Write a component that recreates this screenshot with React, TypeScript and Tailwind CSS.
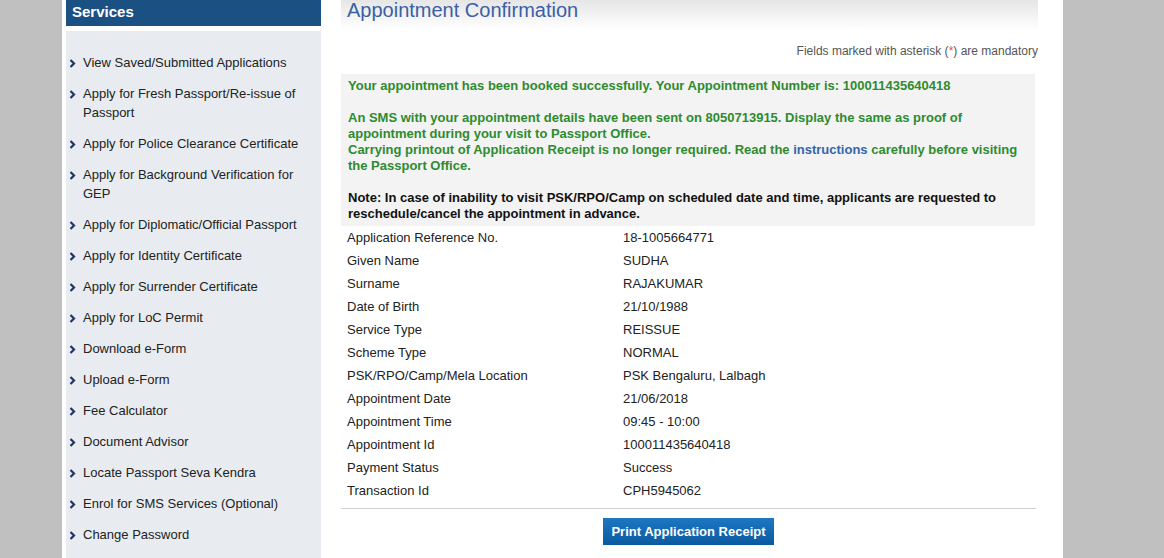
import React from 'react';

const services = [
  'View Saved/Submitted Applications',
  'Apply for Fresh Passport/Re-issue of Passport',
  'Apply for Police Clearance Certificate',
  'Apply for Background Verification for GEP',
  'Apply for Diplomatic/Official Passport',
  'Apply for Identity Certificate',
  'Apply for Surrender Certificate',
  'Apply for LoC Permit',
  'Download e-Form',
  'Upload e-Form',
  'Fee Calculator',
  'Document Advisor',
  'Locate Passport Seva Kendra',
  'Enrol for SMS Services (Optional)',
  'Change Password',
];

const details = [
  { label: 'Application Reference No.', value: '18-1005664771' },
  { label: 'Given Name', value: 'SUDHA' },
  { label: 'Surname', value: 'RAJAKUMAR' },
  { label: 'Date of Birth', value: '21/10/1988' },
  { label: 'Service Type', value: 'REISSUE' },
  { label: 'Scheme Type', value: 'NORMAL' },
  { label: 'PSK/RPO/Camp/Mela Location', value: 'PSK Bengaluru, Lalbagh' },
  { label: 'Appointment Date', value: '21/06/2018' },
  { label: 'Appointment Time', value: '09:45 - 10:00' },
  { label: 'Appointment Id', value: '100011435640418' },
  { label: 'Payment Status', value: 'Success' },
  { label: 'Transaction Id', value: 'CPH5945062' },
];

const Chevron = () => (
  <svg width="7" height="9" viewBox="0 0 7 9" className="shrink-0 mt-[6px]">
    <path d="M1.5 1 L5 4.5 L1.5 8" fill="none" stroke="#1f3566" strokeWidth="2.2" />
  </svg>
);

const App = () => {
  return (
    <div
      className="h-[558px] w-[1164px] overflow-hidden bg-[#c0c0c0] flex"
      style={{ fontFamily: '"Liberation Sans", Arial, sans-serif' }}
    >
      <div className="ml-[62px] w-[1001px] bg-white flex">
        {/* sidebar */}
        <aside className="ml-[4px] w-[255px] flex flex-col">
          <div className="h-[26px] bg-[#1b5083] text-white font-bold text-[15px] leading-[24px] pl-[6px]">
            Services
          </div>
          <div className="mt-[5px] flex-1 bg-[#e8ecf0] pt-[22px]">
            <ul className="flex flex-col gap-[12px]">
              {services.map((s, i) => (
                <li key={i} className="flex gap-[7px] pl-[3px] pr-[14px] text-[13px] leading-[19px] text-[#222]">
                  <Chevron />
                  <span>{s}</span>
                </li>
              ))}
            </ul>
          </div>
        </aside>

        {/* content */}
        <main className="ml-[20px] w-[697px] flex flex-col">
          <div className="h-[30px] bg-gradient-to-b from-[#e6e6e6] to-white pl-[6px]">
            <h1 className="text-[20px] leading-[20px] text-[#3a5fa5]">Appointment Confirmation</h1>
          </div>
          <p className="mt-[14px] text-right text-[12px] leading-[14px] text-[#555]">
            Fields marked with asterisk (<span className="text-[#d9534f]">*</span>) are mandatory
          </p>
          <div className="mt-[16px] w-[694px] bg-[#f3f3f3] pt-[4px] pb-[4px] pl-[7px] pr-[10px] text-[13px] leading-[16px] font-bold text-[#2e8b2e]">
            <p>Your appointment has been booked successfully. Your Appointment Number is: 100011435640418</p>
            <p className="mt-[16px]">
              An SMS with your appointment details have been sent on 8050713915. Display the same as proof of
              appointment during your visit to Passport Office.
            </p>
            <p>
              Carrying printout of Application Receipt is no longer required. Read the{' '}
              <span className="text-[#3366aa]">instructions</span> carefully before visiting the Passport Office.
            </p>
            <p className="mt-[16px] text-[#111]">
              Note: In case of inability to visit PSK/RPO/Camp on scheduled date and time, applicants are requested to
              reschedule/cancel the appointment in advance.
            </p>
          </div>
          <div className="flex flex-col">
            {details.map((d, i) => (
              <div key={i} className="flex h-[23px] items-center text-[13px] text-[#222]">
                <span className="w-[282px] pl-[6px]">{d.label}</span>
                <span>{d.value}</span>
              </div>
            ))}
          </div>
          <div className="mt-[6px] h-px w-[695px] bg-[#cfcfcf]" />
          <div className="mt-[9px] w-[695px] flex justify-center">
            <button className="h-[27px] px-[8px] bg-gradient-to-b from-[#1d77c2] to-[#0a5a9f] text-white font-bold text-[13px]">
              Print Application Receipt
            </button>
          </div>
        </main>
      </div>
    </div>
  );
};

export default App;
